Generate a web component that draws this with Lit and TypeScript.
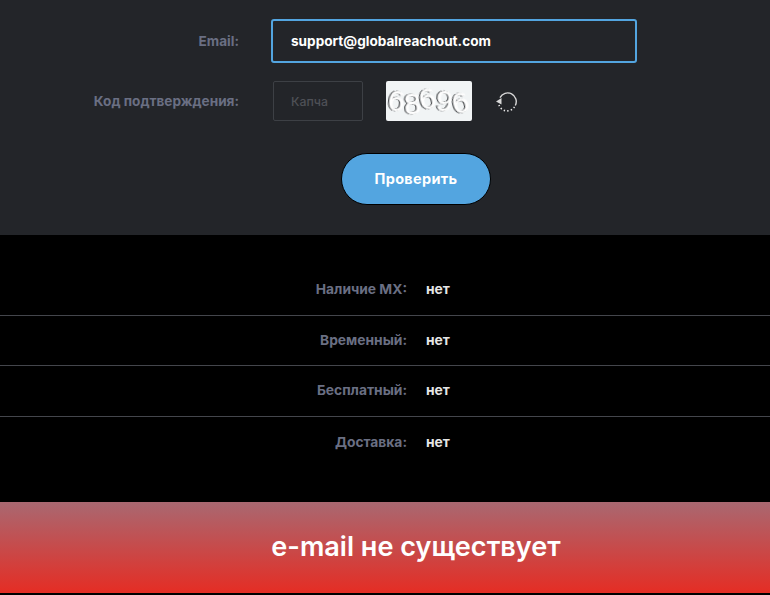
import { LitElement, html, css, svg } from "lit";
import { customElement } from "lit/decorators.js";

const rows = [
  ["Наличие MX:", "нет"],
  ["Временный:", "нет"],
  ["Бесплатный:", "нет"],
  ["Доставка:", "нет"],
];

const digits = [
  { c: "6", x: 2, y: 30, r: 6 },
  { c: "8", x: 18, y: 33, r: -4 },
  { c: "6", x: 33, y: 28, r: -12 },
  { c: "9", x: 50, y: 30, r: 6 },
  { c: "6", x: 66, y: 32, r: -14 },
];

@customElement("app-root")
export class AppRoot extends LitElement {
  static styles = css`
    :host {
      display: block;
      width: 770px;
      height: 595px;
      background: #000;
      font-family: "Inter", "Noto Sans", sans-serif;
      font-weight: 700;
      overflow: hidden;
    }
    .panel {
      height: 235px;
      box-sizing: border-box;
      background: #232529;
      padding-top: 19px;
    }
    .row {
      display: grid;
      grid-template-columns: 239px auto;
      column-gap: 32px;
      align-items: center;
      justify-content: start;
    }
    .label {
      text-align: right;
      color: #6a6f83;
      font-size: 13.6px;
    }
    .email {
      box-sizing: border-box;
      width: 366px;
      height: 44px;
      border: 2px solid #53a5e0;
      border-radius: 3px;
      background: #232529;
      color: #fff;
      font-size: 13.6px;
      display: flex;
      align-items: center;
      padding-left: 18px;
    }
    .captcha-row {
      margin-top: 18px;
    }
    .captcha-controls {
      display: flex;
      align-items: center;
      margin-left: 2px;
    }
    .captcha-input {
      box-sizing: border-box;
      width: 90px;
      height: 40px;
      border: 1px solid #3d4045;
      border-radius: 2px;
      color: #4e5056;
      font-size: 12.3px;
      font-weight: 500;
      display: flex;
      align-items: center;
      padding-left: 17px;
    }
    .captcha-img {
      display: block;
      margin-left: 23px;
      width: 86px;
      height: 40px;
      background: #f1f4f5;
      border-radius: 2px;
      overflow: hidden;
    }
    .captcha-img text {
      font-family: "Liberation Sans", sans-serif;
      font-size: 30px;
      font-weight: 400;
      fill: #fff;
      stroke: #fff;
      stroke-width: 0.5;
      filter: drop-shadow(-0.8px 0.6px 0 #222528);
    }
    .refresh {
      display: block;
      margin-left: 23px;
      margin-top: 1px;
    }
    .actions {
      display: flex;
      justify-content: center;
      margin-top: 32px;
      padding-left: 62px;
    }
    .check {
      box-sizing: border-box;
      width: 150px;
      height: 52px;
      border-radius: 26px;
      border: 1px solid #000;
      background: #53a5e0;
      color: #fff;
      font-family: inherit;
      font-weight: 700;
      font-size: 14.5px;
      letter-spacing: 0.3px;
      padding: 0 0 1px;
    }
    .results {
      height: 267px;
      box-sizing: border-box;
      padding-top: 30px;
    }
    .result {
      display: grid;
      grid-template-columns: 407px auto;
      column-gap: 19px;
      align-items: center;
      justify-content: start;
      height: 51px;
      box-sizing: border-box;
      padding-bottom: 2px;
      font-size: 13.8px;
      border-bottom: 1px solid #44464c;
    }
    .result:nth-child(2) { height: 50px; }
    .result:last-child { border-bottom: none; }
    .result .k { text-align: right; color: #6a6f83; }
    .result .v { color: #e6e6e6; }
    .banner {
      height: 91px;
      background: linear-gradient(180deg, #a96871 0%, #e52d24 100%);
      color: #fff;
      font-size: 27.1px;
      font-weight: 600;
      display: flex;
      align-items: center;
      justify-content: center;
      padding: 0 0 2px 62px;
      box-sizing: border-box;
    }
  `;

  render() {
    return html`
      <section class="panel">
        <div class="row">
          <div class="label">Email:</div>
          <div class="email">support@globalreachout.com</div>
        </div>
        <div class="row captcha-row">
          <div class="label">Код подтверждения:</div>
          <div class="captcha-controls">
            <div class="captcha-input">Капча</div>
            <svg class="captcha-img" viewBox="0 0 86 40">
              ${digits.map(
                (d) => svg`<text x=${d.x} y=${d.y} transform="rotate(${d.r} ${d.x + 8} ${d.y - 10})">${d.c}</text>`
              )}
            </svg>
            <svg class="refresh" width="24" height="24" viewBox="0 0 24 24" fill="none">
              <path d="M5 7.6 A8.6 8.6 0 1 1 20.3 15.5" stroke="#d8d8d8" stroke-width="1.4" />
              <path d="M19.5 16.8 A8.6 8.6 0 0 1 4 15" stroke="#e8e8e8" stroke-width="1.6" stroke-dasharray="1.4 2.2" />
              <path d="M1 11.5 L6.5 8 L6.5 14.5 Z" fill="#d8d8d8" />
            </svg>
          </div>
        </div>
        <div class="actions">
          <button class="check">Проверить</button>
        </div>
      </section>
      <section class="results">
        ${rows.map(
          ([k, v]) => html`<div class="result"><div class="k">${k}</div><div class="v">${v}</div></div>`
        )}
      </section>
      <div class="banner">e-mail не существует</div>
    `;
  }
}
